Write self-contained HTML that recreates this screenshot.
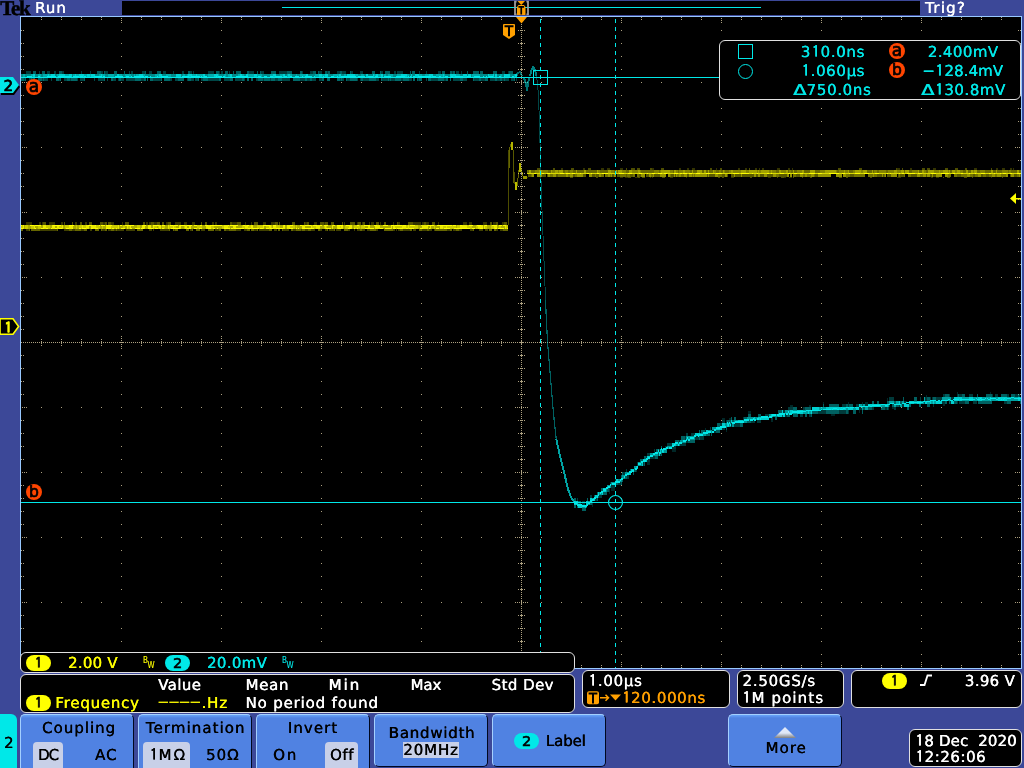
<!DOCTYPE html>
<html lang="en"><head><meta charset="utf-8"><title>Tek oscilloscope</title><style>
html,body{margin:0;padding:0}
body{width:1024px;height:768px;overflow:hidden;background:#3c4898;position:relative;will-change:transform;font:14px/14px 'DejaVu Sans','Liberation Sans',sans-serif}
header,main,section,nav,div,svg,.t,.bw{position:absolute;box-sizing:border-box}
header,main,section,nav{left:0;top:0;width:1024px;height:0}
.t{white-space:pre;text-rendering:geometricPrecision;font:15px/15px 'DejaVu Sans','Liberation Sans',sans-serif;-webkit-text-stroke:0.14px currentColor;text-shadow:.3px 0 0 currentColor}
.topbar{left:122px;top:1px;width:798px;height:14px;background:#000}
.acq{left:282px;top:7px;width:479px;height:1px;background:#00e8e8}
.screen{left:20px;top:16px;width:1002px;height:653px;background:#000;border:1px solid #98c8ff}
.plot{left:0;top:0}
.box{background:#000;border:1px solid #e0e0e0;border-radius:6px}
.btn{background:linear-gradient(to bottom,#68a4f8 0,#5082e2 3px);border-radius:5px 5px 0 0;border-top:1px solid #a4d0ff;border-left:1px solid #a4d0ff;border-right:1px solid #000820;top:714px;height:54px;width:114px}
.btn.f{border-radius:5px;height:53px;border-bottom:1px solid #000820}
.tab{left:0;top:714px;width:17px;height:54px;background:#00e8e8;border-radius:0 6px 0 0}
.sel{background:#c8d0e8;border-radius:4px 4px 0 0}
.pill{border-radius:8px;width:25px;height:16px;color:#000;text-align:center;font:14.5px/16px 'DejaVu Sans','Liberation Sans',sans-serif;-webkit-text-stroke:.6px #000}
.pill.p1{font-family:'IPAGothic','Liberation Sans',sans-serif;-webkit-text-stroke-width:.7px;background:#ffff00}
.pill.p2{background:#00e8e8}
.circ{border-radius:50%;background:#ff4500;color:#000;text-align:center;font:17px/14px 'DejaVu Sans','Liberation Sans',sans-serif;-webkit-text-stroke:.7px #000;width:16px;height:16px}
.circ.b{font-size:15.5px;line-height:17px}
.bw{font:8px/8px 'DejaVu Sans Condensed','DejaVu Sans','Liberation Sans',sans-serif;-webkit-text-stroke:.1px currentColor}
.dl{display:inline-block;line-height:0;transform:scaleX(1.3);transform-origin:0 50%;margin-right:2.8px}.o{font-family:'IPAGothic','Liberation Sans',sans-serif;font-size:15.5px;display:inline-block;width:9.5px;text-align:center;letter-spacing:0;line-height:0;position:relative;top:0px;-webkit-text-stroke-width:.45px}
.one{font-family:'IPAGothic','Liberation Sans',sans-serif;-webkit-text-stroke-width:.7px}
</style></head>
<body>
<header><div class="topbar" style="left:122px;top:1px"></div><div class="acq" style="left:282px;top:7px"></div><svg width="20" height="16" style="left:512px;top:0px" viewBox="512 0 20 16"><path d="M516.6 1.6h-1.6v12.8h1.6M526.4 1.6h1.6v12.8h-1.6" fill="none" stroke="#a09c9c" stroke-width="1.8"/><path d="M517.5 1h7.5l-3.75 4z" fill="#ffa000"/><path d="M517 7l1.5-2h5.5l1.5 2v8h-8.5z" fill="#ffa000"/><path d="M518.4 6.1h5.7v1.6h-2v6.8h-1.7v-6.8h-2z" fill="#000"/></svg><span class="t" style="left:0.2px;top:-2px;letter-spacing:-1.25px;color:#000;font:bold 21px/21px 'Liberation Serif',serif;-webkit-text-stroke:0.5px currentColor;text-shadow:none">Tek</span><span class="t" style="left:35px;top:1px;letter-spacing:1px;color:#ffffff">Run</span><span class="t" style="left:925px;top:1px;letter-spacing:1.25px;color:#ffffff">Trig?</span></header>
<main><div class="screen" style="left:20px;top:16px"></div><svg class="plot" width="1024" height="768" viewBox="0 0 1024 768"><g stroke="#aca080" stroke-width="1" shape-rendering="crispEdges"><line x1="41" y1="82.5" x2="1002" y2="82.5" stroke-dasharray="1 19" stroke-dashoffset="0"/><line x1="41" y1="147.5" x2="1002" y2="147.5" stroke-dasharray="1 19" stroke-dashoffset="0"/><line x1="41" y1="212.5" x2="1002" y2="212.5" stroke-dasharray="1 19" stroke-dashoffset="0"/><line x1="41" y1="277.5" x2="1002" y2="277.5" stroke-dasharray="1 19" stroke-dashoffset="0"/><line x1="21" y1="342.5" x2="1021" y2="342.5" stroke-dasharray="1 1" stroke-dashoffset="0"/><line x1="41" y1="407.5" x2="1002" y2="407.5" stroke-dasharray="1 19" stroke-dashoffset="0"/><line x1="41" y1="472.5" x2="1002" y2="472.5" stroke-dasharray="1 19" stroke-dashoffset="0"/><line x1="41" y1="537.5" x2="1002" y2="537.5" stroke-dasharray="1 19" stroke-dashoffset="0"/><line x1="41" y1="602.5" x2="1002" y2="602.5" stroke-dasharray="1 19" stroke-dashoffset="0"/><line x1="121.5" y1="30" x2="121.5" y2="655" stroke-dasharray="1 12" stroke-dashoffset="0"/><line x1="221.5" y1="30" x2="221.5" y2="655" stroke-dasharray="1 12" stroke-dashoffset="0"/><line x1="321.5" y1="30" x2="321.5" y2="655" stroke-dasharray="1 12" stroke-dashoffset="0"/><line x1="421.5" y1="30" x2="421.5" y2="655" stroke-dasharray="1 12" stroke-dashoffset="0"/><line x1="521.5" y1="18" x2="521.5" y2="668" stroke-dasharray="1 1" stroke-dashoffset="0"/><line x1="621.5" y1="30" x2="621.5" y2="655" stroke-dasharray="1 12" stroke-dashoffset="0"/><line x1="721.5" y1="30" x2="721.5" y2="655" stroke-dasharray="1 12" stroke-dashoffset="0"/><line x1="821.5" y1="30" x2="821.5" y2="655" stroke-dasharray="1 12" stroke-dashoffset="0"/><line x1="921.5" y1="30" x2="921.5" y2="655" stroke-dasharray="1 12" stroke-dashoffset="0"/><path d="M41 17.5h1M41 19.5h1M41 665.5h1M41 667.5h1M61 17.5h1M61 19.5h1M61 665.5h1M61 667.5h1M81 17.5h1M81 19.5h1M81 665.5h1M81 667.5h1M101 17.5h1M101 19.5h1M101 665.5h1M101 667.5h1M121 18.5h1M121 20.5h1M121 22.5h1M121 662.5h1M121 664.5h1M121 666.5h1M141 17.5h1M141 19.5h1M141 665.5h1M141 667.5h1M161 17.5h1M161 19.5h1M161 665.5h1M161 667.5h1M181 17.5h1M181 19.5h1M181 665.5h1M181 667.5h1M201 17.5h1M201 19.5h1M201 665.5h1M201 667.5h1M221 18.5h1M221 20.5h1M221 22.5h1M221 662.5h1M221 664.5h1M221 666.5h1M241 17.5h1M241 19.5h1M241 665.5h1M241 667.5h1M261 17.5h1M261 19.5h1M261 665.5h1M261 667.5h1M281 17.5h1M281 19.5h1M281 665.5h1M281 667.5h1M301 17.5h1M301 19.5h1M301 665.5h1M301 667.5h1M321 18.5h1M321 20.5h1M321 22.5h1M321 662.5h1M321 664.5h1M321 666.5h1M341 17.5h1M341 19.5h1M341 665.5h1M341 667.5h1M361 17.5h1M361 19.5h1M361 665.5h1M361 667.5h1M381 17.5h1M381 19.5h1M381 665.5h1M381 667.5h1M401 17.5h1M401 19.5h1M401 665.5h1M401 667.5h1M421 18.5h1M421 20.5h1M421 22.5h1M421 662.5h1M421 664.5h1M421 666.5h1M441 17.5h1M441 19.5h1M441 665.5h1M441 667.5h1M461 17.5h1M461 19.5h1M461 665.5h1M461 667.5h1M481 17.5h1M481 19.5h1M481 665.5h1M481 667.5h1M501 17.5h1M501 19.5h1M501 665.5h1M501 667.5h1M541 17.5h1M541 19.5h1M541 665.5h1M541 667.5h1M561 17.5h1M561 19.5h1M561 665.5h1M561 667.5h1M581 17.5h1M581 19.5h1M581 665.5h1M581 667.5h1M601 17.5h1M601 19.5h1M601 665.5h1M601 667.5h1M621 18.5h1M621 20.5h1M621 22.5h1M621 662.5h1M621 664.5h1M621 666.5h1M641 17.5h1M641 19.5h1M641 665.5h1M641 667.5h1M661 17.5h1M661 19.5h1M661 665.5h1M661 667.5h1M681 17.5h1M681 19.5h1M681 665.5h1M681 667.5h1M701 17.5h1M701 19.5h1M701 665.5h1M701 667.5h1M721 18.5h1M721 20.5h1M721 22.5h1M721 662.5h1M721 664.5h1M721 666.5h1M741 17.5h1M741 19.5h1M741 665.5h1M741 667.5h1M761 17.5h1M761 19.5h1M761 665.5h1M761 667.5h1M781 17.5h1M781 19.5h1M781 665.5h1M781 667.5h1M801 17.5h1M801 19.5h1M801 665.5h1M801 667.5h1M821 18.5h1M821 20.5h1M821 22.5h1M821 662.5h1M821 664.5h1M821 666.5h1M841 17.5h1M841 19.5h1M841 665.5h1M841 667.5h1M861 17.5h1M861 19.5h1M861 665.5h1M861 667.5h1M881 17.5h1M881 19.5h1M881 665.5h1M881 667.5h1M901 17.5h1M901 19.5h1M901 665.5h1M901 667.5h1M921 18.5h1M921 20.5h1M921 22.5h1M921 662.5h1M921 664.5h1M921 666.5h1M941 17.5h1M941 19.5h1M941 665.5h1M941 667.5h1M961 17.5h1M961 19.5h1M961 665.5h1M961 667.5h1M981 17.5h1M981 19.5h1M981 665.5h1M981 667.5h1M1001 17.5h1M1001 19.5h1M1001 665.5h1M1001 667.5h1M21 30.5h1M23 30.5h1M1018 30.5h1M1020 30.5h1M21 43.5h1M23 43.5h1M1018 43.5h1M1020 43.5h1M21 56.5h1M23 56.5h1M1018 56.5h1M1020 56.5h1M21 69.5h1M23 69.5h1M1018 69.5h1M1020 69.5h1M22 82.5h1M24 82.5h1M26 82.5h1M1015 82.5h1M1017 82.5h1M1019 82.5h1M21 95.5h1M23 95.5h1M1018 95.5h1M1020 95.5h1M21 108.5h1M23 108.5h1M1018 108.5h1M1020 108.5h1M21 121.5h1M23 121.5h1M1018 121.5h1M1020 121.5h1M21 134.5h1M23 134.5h1M1018 134.5h1M1020 134.5h1M22 147.5h1M24 147.5h1M26 147.5h1M1015 147.5h1M1017 147.5h1M1019 147.5h1M21 160.5h1M23 160.5h1M1018 160.5h1M1020 160.5h1M21 173.5h1M23 173.5h1M1018 173.5h1M1020 173.5h1M21 186.5h1M23 186.5h1M1018 186.5h1M1020 186.5h1M21 199.5h1M23 199.5h1M1018 199.5h1M1020 199.5h1M22 212.5h1M24 212.5h1M26 212.5h1M1015 212.5h1M1017 212.5h1M1019 212.5h1M21 225.5h1M23 225.5h1M1018 225.5h1M1020 225.5h1M21 238.5h1M23 238.5h1M1018 238.5h1M1020 238.5h1M21 251.5h1M23 251.5h1M1018 251.5h1M1020 251.5h1M21 264.5h1M23 264.5h1M1018 264.5h1M1020 264.5h1M22 277.5h1M24 277.5h1M26 277.5h1M1015 277.5h1M1017 277.5h1M1019 277.5h1M21 290.5h1M23 290.5h1M1018 290.5h1M1020 290.5h1M21 303.5h1M23 303.5h1M1018 303.5h1M1020 303.5h1M21 316.5h1M23 316.5h1M1018 316.5h1M1020 316.5h1M21 329.5h1M23 329.5h1M1018 329.5h1M1020 329.5h1M21 355.5h1M23 355.5h1M1018 355.5h1M1020 355.5h1M21 368.5h1M23 368.5h1M1018 368.5h1M1020 368.5h1M21 381.5h1M23 381.5h1M1018 381.5h1M1020 381.5h1M21 394.5h1M23 394.5h1M1018 394.5h1M1020 394.5h1M22 407.5h1M24 407.5h1M26 407.5h1M1015 407.5h1M1017 407.5h1M1019 407.5h1M21 420.5h1M23 420.5h1M1018 420.5h1M1020 420.5h1M21 433.5h1M23 433.5h1M1018 433.5h1M1020 433.5h1M21 446.5h1M23 446.5h1M1018 446.5h1M1020 446.5h1M21 459.5h1M23 459.5h1M1018 459.5h1M1020 459.5h1M22 472.5h1M24 472.5h1M26 472.5h1M1015 472.5h1M1017 472.5h1M1019 472.5h1M21 485.5h1M23 485.5h1M1018 485.5h1M1020 485.5h1M21 498.5h1M23 498.5h1M1018 498.5h1M1020 498.5h1M21 511.5h1M23 511.5h1M1018 511.5h1M1020 511.5h1M21 524.5h1M23 524.5h1M1018 524.5h1M1020 524.5h1M22 537.5h1M24 537.5h1M26 537.5h1M1015 537.5h1M1017 537.5h1M1019 537.5h1M21 550.5h1M23 550.5h1M1018 550.5h1M1020 550.5h1M21 563.5h1M23 563.5h1M1018 563.5h1M1020 563.5h1M21 576.5h1M23 576.5h1M1018 576.5h1M1020 576.5h1M21 589.5h1M23 589.5h1M1018 589.5h1M1020 589.5h1M22 602.5h1M24 602.5h1M26 602.5h1M1015 602.5h1M1017 602.5h1M1019 602.5h1M21 615.5h1M23 615.5h1M1018 615.5h1M1020 615.5h1M21 628.5h1M23 628.5h1M1018 628.5h1M1020 628.5h1M21 641.5h1M23 641.5h1M1018 641.5h1M1020 641.5h1M21 654.5h1M23 654.5h1M1018 654.5h1M1020 654.5h1M518 30.5h1M520 30.5h3M524 30.5h1M518 43.5h1M520 43.5h3M524 43.5h1M518 56.5h1M520 56.5h3M524 56.5h1M518 69.5h1M520 69.5h3M524 69.5h1M515 82.5h1M517 82.5h1M519 82.5h1M521 82.5h1M523 82.5h1M525 82.5h1M527 82.5h1M521 81.5h1M521 83.5h1M518 95.5h1M520 95.5h3M524 95.5h1M518 108.5h1M520 108.5h3M524 108.5h1M518 121.5h1M520 121.5h3M524 121.5h1M518 134.5h1M520 134.5h3M524 134.5h1M515 147.5h1M517 147.5h1M519 147.5h1M521 147.5h1M523 147.5h1M525 147.5h1M527 147.5h1M521 146.5h1M521 148.5h1M518 160.5h1M520 160.5h3M524 160.5h1M518 173.5h1M520 173.5h3M524 173.5h1M518 186.5h1M520 186.5h3M524 186.5h1M518 199.5h1M520 199.5h3M524 199.5h1M515 212.5h1M517 212.5h1M519 212.5h1M521 212.5h1M523 212.5h1M525 212.5h1M527 212.5h1M521 211.5h1M521 213.5h1M518 225.5h1M520 225.5h3M524 225.5h1M518 238.5h1M520 238.5h3M524 238.5h1M518 251.5h1M520 251.5h3M524 251.5h1M518 264.5h1M520 264.5h3M524 264.5h1M515 277.5h1M517 277.5h1M519 277.5h1M521 277.5h1M523 277.5h1M525 277.5h1M527 277.5h1M521 276.5h1M521 278.5h1M518 290.5h1M520 290.5h3M524 290.5h1M518 303.5h1M520 303.5h3M524 303.5h1M518 316.5h1M520 316.5h3M524 316.5h1M518 329.5h1M520 329.5h3M524 329.5h1M515 342.5h1M517 342.5h1M519 342.5h1M521 342.5h1M523 342.5h1M525 342.5h1M527 342.5h1M521 341.5h1M521 343.5h1M518 355.5h1M520 355.5h3M524 355.5h1M518 368.5h1M520 368.5h3M524 368.5h1M518 381.5h1M520 381.5h3M524 381.5h1M518 394.5h1M520 394.5h3M524 394.5h1M515 407.5h1M517 407.5h1M519 407.5h1M521 407.5h1M523 407.5h1M525 407.5h1M527 407.5h1M521 406.5h1M521 408.5h1M518 420.5h1M520 420.5h3M524 420.5h1M518 433.5h1M520 433.5h3M524 433.5h1M518 446.5h1M520 446.5h3M524 446.5h1M518 459.5h1M520 459.5h3M524 459.5h1M515 472.5h1M517 472.5h1M519 472.5h1M521 472.5h1M523 472.5h1M525 472.5h1M527 472.5h1M521 471.5h1M521 473.5h1M518 485.5h1M520 485.5h3M524 485.5h1M518 498.5h1M520 498.5h3M524 498.5h1M518 511.5h1M520 511.5h3M524 511.5h1M518 524.5h1M520 524.5h3M524 524.5h1M515 537.5h1M517 537.5h1M519 537.5h1M521 537.5h1M523 537.5h1M525 537.5h1M527 537.5h1M521 536.5h1M521 538.5h1M518 550.5h1M520 550.5h3M524 550.5h1M518 563.5h1M520 563.5h3M524 563.5h1M518 576.5h1M520 576.5h3M524 576.5h1M518 589.5h1M520 589.5h3M524 589.5h1M515 602.5h1M517 602.5h1M519 602.5h1M521 602.5h1M523 602.5h1M525 602.5h1M527 602.5h1M521 601.5h1M521 603.5h1M518 615.5h1M520 615.5h3M524 615.5h1M518 628.5h1M520 628.5h3M524 628.5h1M518 641.5h1M520 641.5h3M524 641.5h1M518 654.5h1M520 654.5h3M524 654.5h1M41 339.5h1M41 341.5h1M41 342.5h1M41 343.5h1M41 345.5h1M61 339.5h1M61 341.5h1M61 342.5h1M61 343.5h1M61 345.5h1M81 339.5h1M81 341.5h1M81 342.5h1M81 343.5h1M81 345.5h1M101 339.5h1M101 341.5h1M101 342.5h1M101 343.5h1M101 345.5h1M121 336.5h1M121 338.5h1M121 340.5h1M121 342.5h1M121 344.5h1M121 346.5h1M121 348.5h1M120 342.5h3M141 339.5h1M141 341.5h1M141 342.5h1M141 343.5h1M141 345.5h1M161 339.5h1M161 341.5h1M161 342.5h1M161 343.5h1M161 345.5h1M181 339.5h1M181 341.5h1M181 342.5h1M181 343.5h1M181 345.5h1M201 339.5h1M201 341.5h1M201 342.5h1M201 343.5h1M201 345.5h1M221 336.5h1M221 338.5h1M221 340.5h1M221 342.5h1M221 344.5h1M221 346.5h1M221 348.5h1M220 342.5h3M241 339.5h1M241 341.5h1M241 342.5h1M241 343.5h1M241 345.5h1M261 339.5h1M261 341.5h1M261 342.5h1M261 343.5h1M261 345.5h1M281 339.5h1M281 341.5h1M281 342.5h1M281 343.5h1M281 345.5h1M301 339.5h1M301 341.5h1M301 342.5h1M301 343.5h1M301 345.5h1M321 336.5h1M321 338.5h1M321 340.5h1M321 342.5h1M321 344.5h1M321 346.5h1M321 348.5h1M320 342.5h3M341 339.5h1M341 341.5h1M341 342.5h1M341 343.5h1M341 345.5h1M361 339.5h1M361 341.5h1M361 342.5h1M361 343.5h1M361 345.5h1M381 339.5h1M381 341.5h1M381 342.5h1M381 343.5h1M381 345.5h1M401 339.5h1M401 341.5h1M401 342.5h1M401 343.5h1M401 345.5h1M421 336.5h1M421 338.5h1M421 340.5h1M421 342.5h1M421 344.5h1M421 346.5h1M421 348.5h1M420 342.5h3M441 339.5h1M441 341.5h1M441 342.5h1M441 343.5h1M441 345.5h1M461 339.5h1M461 341.5h1M461 342.5h1M461 343.5h1M461 345.5h1M481 339.5h1M481 341.5h1M481 342.5h1M481 343.5h1M481 345.5h1M501 339.5h1M501 341.5h1M501 342.5h1M501 343.5h1M501 345.5h1M521 336.5h1M521 338.5h1M521 340.5h1M521 342.5h1M521 344.5h1M521 346.5h1M521 348.5h1M520 342.5h3M541 339.5h1M541 341.5h1M541 342.5h1M541 343.5h1M541 345.5h1M561 339.5h1M561 341.5h1M561 342.5h1M561 343.5h1M561 345.5h1M581 339.5h1M581 341.5h1M581 342.5h1M581 343.5h1M581 345.5h1M601 339.5h1M601 341.5h1M601 342.5h1M601 343.5h1M601 345.5h1M621 336.5h1M621 338.5h1M621 340.5h1M621 342.5h1M621 344.5h1M621 346.5h1M621 348.5h1M620 342.5h3M641 339.5h1M641 341.5h1M641 342.5h1M641 343.5h1M641 345.5h1M661 339.5h1M661 341.5h1M661 342.5h1M661 343.5h1M661 345.5h1M681 339.5h1M681 341.5h1M681 342.5h1M681 343.5h1M681 345.5h1M701 339.5h1M701 341.5h1M701 342.5h1M701 343.5h1M701 345.5h1M721 336.5h1M721 338.5h1M721 340.5h1M721 342.5h1M721 344.5h1M721 346.5h1M721 348.5h1M720 342.5h3M741 339.5h1M741 341.5h1M741 342.5h1M741 343.5h1M741 345.5h1M761 339.5h1M761 341.5h1M761 342.5h1M761 343.5h1M761 345.5h1M781 339.5h1M781 341.5h1M781 342.5h1M781 343.5h1M781 345.5h1M801 339.5h1M801 341.5h1M801 342.5h1M801 343.5h1M801 345.5h1M821 336.5h1M821 338.5h1M821 340.5h1M821 342.5h1M821 344.5h1M821 346.5h1M821 348.5h1M820 342.5h3M841 339.5h1M841 341.5h1M841 342.5h1M841 343.5h1M841 345.5h1M861 339.5h1M861 341.5h1M861 342.5h1M861 343.5h1M861 345.5h1M881 339.5h1M881 341.5h1M881 342.5h1M881 343.5h1M881 345.5h1M901 339.5h1M901 341.5h1M901 342.5h1M901 343.5h1M901 345.5h1M921 336.5h1M921 338.5h1M921 340.5h1M921 342.5h1M921 344.5h1M921 346.5h1M921 348.5h1M920 342.5h3M941 339.5h1M941 341.5h1M941 342.5h1M941 343.5h1M941 345.5h1M961 339.5h1M961 341.5h1M961 342.5h1M961 343.5h1M961 345.5h1M981 339.5h1M981 341.5h1M981 342.5h1M981 343.5h1M981 345.5h1M1001 339.5h1M1001 341.5h1M1001 342.5h1M1001 343.5h1M1001 345.5h1"/></g><g fill="none" shape-rendering="crispEdges" stroke-linejoin="round"><path d="M26 223.5h6M39 223.5h2M42 223.5h1M49 223.5h6M61 223.5h2M75 223.5h2M85 223.5h2M103 223.5h2M111 223.5h3M122 223.5h1M146 223.5h2M149 223.5h2M154 223.5h3M166 223.5h2M175 223.5h6M184 223.5h3M192 223.5h3M212 223.5h2M215 223.5h2M232 223.5h5M245 223.5h1M251 223.5h1M263 223.5h3M271 223.5h4M305 223.5h2M314 223.5h3M324 223.5h1M344 223.5h1M357 223.5h1M362 223.5h1M369 223.5h1M371 223.5h3M380 223.5h1M393 223.5h1M398 223.5h2M413 223.5h8M422 223.5h2M426 223.5h3M438 223.5h1M463 223.5h4M469 223.5h3M483 223.5h4M493 223.5h3M502 223.5h2" stroke="#ffff00" stroke-width="3" stroke-opacity="0.2"/><path d="M43 223.5h3M64 223.5h1M72 223.5h1M80 223.5h2M89 223.5h3M100 223.5h3M105 223.5h2M108 223.5h3M125 223.5h4M143 223.5h2M151 223.5h3M157 223.5h3M162 223.5h2M168 223.5h3M201 223.5h1M205 223.5h2M230 223.5h2M237 223.5h4M254 223.5h4M275 223.5h3M279 223.5h1M292 223.5h3M304 223.5h1M307 223.5h2M320 223.5h4M325 223.5h3M331 223.5h3M342 223.5h1M350 223.5h5M358 223.5h3M363 223.5h2M376 223.5h3M384 223.5h2M397 223.5h1M408 223.5h5M424 223.5h2M432 223.5h3M490 223.5h2M496 223.5h2M504 223.5h3" stroke="#ffff00" stroke-width="3" stroke-opacity="0.32"/><path d="M24 227h1M28 227h3M35 227h3M41 227h2M50 227h2M55 227h2M63 227h2M73 227h3M77 227h2M89 227h2M100 227h2M103 227h3M119 227h4M125 227h2M131 227h6M140 227h2M145 227h3M151 227h2M157 227h1M161 227h1M165 227h3M176 227h3M181 227h3M187 227h2M191 227h6M202 227h4M214 227h8M230 227h3M236 227h6M253 227h4M264 227h2M272 227h1M280 227h3M285 227h2M295 227h1M297 227h5M305 227h6M320 227h4M327 227h5M333 227h4M343 227h2M352 227h2M360 227h1M365 227h3M370 227h5M380 227h11M392 227h1M418 227h4M428 227h2M431 227h3M435 227h5M456 227h1M472 227h4M483 227h1M487 227h4M497 227h2M501 227h4" stroke="#ffff00" stroke-width="4" stroke-opacity="0.68"/><path d="M21 227h2M25 227h3M31 227h3M38 227h3M46 227h4M59 227h3M65 227h4M76 227h1M79 227h3M83 227h3M96 227h4M102 227h1M111 227h7M123 227h2M128 227h2M137 227h3M154 227h3M158 227h1M162 227h3M169 227h4M174 227h2M184 227h1M197 227h5M211 227h3M222 227h2M228 227h2M242 227h3M248 227h3M257 227h6M266 227h3M271 227h1M276 227h4M290 227h5M296 227h1M312 227h4M324 227h1M326 227h1M340 227h1M345 227h4M354 227h6M361 227h4M395 227h7M406 227h2M409 227h9M434 227h1M443 227h3M447 227h9M457 227h3M467 227h5M476 227h2M485 227h2M491 227h3M499 227h2M506 227h2" stroke="#ffff00" stroke-width="4" stroke-opacity="0.8"/><path d="M23 227h1M34 227h1M43 227h3M52 227h3M57 227h2M62 227h1M69 227h4M82 227h1M86 227h3M91 227h5M106 227h5M118 227h1M127 227h1M130 227h1M142 227h3M148 227h3M153 227h1M159 227h2M168 227h1M173 227h1M179 227h2M185 227h2M189 227h2M206 227h5M224 227h4M233 227h3M245 227h3M251 227h2M263 227h1M269 227h2M273 227h3M283 227h2M287 227h3M302 227h3M311 227h1M316 227h4M325 227h1M332 227h1M337 227h3M341 227h2M349 227h3M368 227h2M375 227h5M391 227h1M393 227h2M402 227h4M408 227h1M422 227h6M430 227h1M440 227h3M446 227h1M460 227h7M478 227h5M484 227h1M494 227h3M505 227h1" stroke="#ffff00" stroke-width="4" stroke-opacity="0.92"/><path d="M21 225.5h1M30 225.5h4M35 225.5h6M53 225.5h8M69 225.5h5M88 225.5h4M95 225.5h1M99 225.5h1M101 225.5h4M106 225.5h6M120 225.5h2M125 225.5h9M143 225.5h3M153 225.5h6M162 225.5h3M170 225.5h3M174 225.5h4M180 225.5h5M187 225.5h5M194 225.5h3M200 225.5h2M205 225.5h3M210 225.5h12M228 225.5h1M230 225.5h8M243 225.5h2M247 225.5h2M263 225.5h7M273 225.5h3M284 225.5h1M290 225.5h3M300 225.5h2M305 225.5h6M313 225.5h4M320 225.5h2M324 225.5h4M333 225.5h2M337 225.5h6M346 225.5h4M357 225.5h2M364 225.5h6M374 225.5h3M383 225.5h5M391 225.5h3M395 225.5h7M403 225.5h3M410 225.5h5M427 225.5h7M437 225.5h15M453 225.5h3M460 225.5h2M469 225.5h4M477 225.5h4M485 225.5h2M492 225.5h5M499 225.5h3M503 225.5h3" stroke="#ffff00" stroke-width="1" stroke-opacity="1"/><path d="M21 228.5h2M35 228.5h1M41 228.5h3M46 228.5h2M51 228.5h1M55 228.5h2M59 228.5h3M66 228.5h3M72 228.5h1M79 228.5h2M82 228.5h4M91 228.5h2M95 228.5h3M106 228.5h5M112 228.5h2M116 228.5h1M121 228.5h4M130 228.5h2M135 228.5h5M141 228.5h3M148 228.5h5M155 228.5h3M162 228.5h2M171 228.5h9M187 228.5h4M194 228.5h3M199 228.5h3M208 228.5h3M213 228.5h2M217 228.5h1M224 228.5h6M231 228.5h2M234 228.5h10M248 228.5h3M252 228.5h7M260 228.5h3M266 228.5h3M270 228.5h3M276 228.5h7M289 228.5h4M296 228.5h1M298 228.5h1M302 228.5h12M326 228.5h5M338 228.5h3M348 228.5h3M354 228.5h1M357 228.5h1M365 228.5h9M380 228.5h3M385 228.5h6M393 228.5h3M397 228.5h6M406 228.5h2M409 228.5h5M420 228.5h3M429 228.5h1M436 228.5h3M444 228.5h6M454 228.5h16M472 228.5h3M480 228.5h3M495 228.5h2M498 228.5h6M507 228.5h1" stroke="#ffff00" stroke-width="1" stroke-opacity="1"/><path d="M26 230h3M40 230h17M64 230h5M72 230h3M81 230h3M90 230h2M102 230h3M108 230h3M114 230h2M117 230h7M126 230h9M149 230h3M153 230h1M160 230h9M174 230h1M190 230h2M201 230h4M215 230h4M226 230h3M236 230h5M244 230h3M254 230h3M259 230h10M274 230h3M283 230h6M293 230h3M301 230h1M305 230h3M311 230h4M320 230h2M325 230h2M329 230h5M336 230h5M348 230h2M354 230h1M357 230h3M362 230h3M367 230h3M376 230h2M393 230h2M396 230h1M398 230h2M403 230h7M413 230h3M422 230h5M429 230h3M434 230h1M447 230h3M453 230h3M459 230h3M470 230h3M479 230h4M485 230h3M496 230h2M500 230h3" stroke="#ffff00" stroke-width="2" stroke-opacity="0.25"/><path d="M21 230h2M29 230h1M31 230h9M57 230h1M69 230h3M75 230h6M84 230h3M95 230h4M101 230h1M105 230h2M111 230h3M116 230h1M137 230h6M169 230h1M173 230h1M175 230h3M186 230h3M192 230h1M196 230h4M208 230h6M219 230h2M224 230h2M229 230h7M247 230h3M251 230h3M257 230h1M269 230h3M278 230h2M282 230h1M291 230h2M296 230h5M302 230h3M308 230h3M318 230h2M327 230h1M334 230h1M344 230h4M360 230h2M370 230h6M384 230h9M400 230h3M410 230h2M419 230h3M427 230h2M435 230h12M450 230h2M456 230h3M473 230h1M489 230h3M494 230h2M503 230h5" stroke="#ffff00" stroke-width="2" stroke-opacity="0.4"/><path d="M561 169h2M583 169h2M601 169h3M607 169h3M620 169h3M652 169h2M679 169h2M687 169h2M692 169h3M716 169h1M738 169h2M745 169h2M755 169h2M759 169h1M762 169h2M777 169h3M788 169h2M792 169h1M897 169h3M910 169h2M933 169h3M974 169h3M996 169h2M1002 169h3M1010 169h2M1013 169h1" stroke="#ffff00" stroke-width="2" stroke-opacity="0.2"/><path d="M537 169h3M553 169h2M571 169h3M588 169h3M626 169h1M631 169h4M637 169h3M650 169h2M661 169h3M710 169h2M720 169h2M749 169h1M838 169h3M859 169h3M896 169h1M902 169h1M922 169h3M927 169h3M945 169h3M955 169h3M965 169h2M991 169h1" stroke="#ffff00" stroke-width="2" stroke-opacity="0.3"/><path d="M527 171.5h2M531 171.5h4M548 171.5h3M563 171.5h2M568 171.5h2M573 171.5h3M577 171.5h7M586 171.5h11M600 171.5h8M614 171.5h2M617 171.5h1M626 171.5h3M641 171.5h13M659 171.5h1M673 171.5h1M678 171.5h1M690 171.5h2M693 171.5h4M702 171.5h2M706 171.5h2M709 171.5h4M716 171.5h3M721 171.5h2M725 171.5h4M776 171.5h3M788 171.5h1M791 171.5h2M794 171.5h3M804 171.5h6M815 171.5h5M837 171.5h2M849 171.5h4M867 171.5h5M873 171.5h1M877 171.5h2M886 171.5h2M904 171.5h1M909 171.5h3M919 171.5h3M926 171.5h2M950 171.5h2M963 171.5h3M968 171.5h3M977 171.5h3M985 171.5h6M993 171.5h3M997 171.5h5M1008 171.5h1M1011 171.5h6M1019 171.5h2" stroke="#ffff00" stroke-width="3" stroke-opacity="0.42"/><path d="M535 171.5h4M542 171.5h6M552 171.5h3M558 171.5h1M565 171.5h3M570 171.5h3M598 171.5h2M611 171.5h3M622 171.5h4M632 171.5h6M640 171.5h1M654 171.5h5M660 171.5h1M670 171.5h3M676 171.5h2M679 171.5h4M685 171.5h5M714 171.5h2M719 171.5h2M724 171.5h1M729 171.5h2M733 171.5h8M746 171.5h3M757 171.5h1M759 171.5h2M769 171.5h2M772 171.5h4M781 171.5h5M789 171.5h2M797 171.5h5M820 171.5h5M836 171.5h1M839 171.5h5M845 171.5h3M853 171.5h2M861 171.5h2M874 171.5h3M879 171.5h7M888 171.5h6M897 171.5h4M912 171.5h6M924 171.5h2M934 171.5h5M940 171.5h3M948 171.5h1M955 171.5h2M960 171.5h3M973 171.5h1M980 171.5h5M1002 171.5h6M1009 171.5h2" stroke="#ffff00" stroke-width="3" stroke-opacity="0.52"/><path d="M529 171.5h2M539 171.5h3M551 171.5h1M555 171.5h3M559 171.5h4M576 171.5h1M584 171.5h2M597 171.5h1M608 171.5h3M616 171.5h1M618 171.5h4M629 171.5h3M638 171.5h2M661 171.5h9M674 171.5h2M683 171.5h2M692 171.5h1M697 171.5h5M704 171.5h2M708 171.5h1M713 171.5h1M723 171.5h1M731 171.5h2M741 171.5h5M749 171.5h8M758 171.5h1M761 171.5h8M771 171.5h1M779 171.5h2M786 171.5h2M793 171.5h1M802 171.5h2M810 171.5h5M825 171.5h11M844 171.5h1M848 171.5h1M855 171.5h6M863 171.5h4M872 171.5h1M894 171.5h3M901 171.5h3M905 171.5h4M918 171.5h1M922 171.5h2M928 171.5h6M939 171.5h1M943 171.5h5M949 171.5h1M952 171.5h3M957 171.5h3M966 171.5h2M971 171.5h2M974 171.5h3M991 171.5h2M996 171.5h1M1017 171.5h2" stroke="#ffff00" stroke-width="3" stroke-opacity="0.64"/><path d="M527 173.5h7M536 173.5h6M544 173.5h3M550 173.5h10M564 173.5h2M570 173.5h2M575 173.5h5M581 173.5h6M589 173.5h2M592 173.5h5M599 173.5h3M608 173.5h11M624 173.5h4M632 173.5h7M642 173.5h5M648 173.5h4M655 173.5h3M662 173.5h2M667 173.5h7M678 173.5h2M682 173.5h1M687 173.5h2M692 173.5h4M700 173.5h6M710 173.5h6M721 173.5h12M739 173.5h2M749 173.5h3M753 173.5h4M758 173.5h9M769 173.5h2M772 173.5h8M784 173.5h4M790 173.5h4M797 173.5h3M803 173.5h6M815 173.5h3M821 173.5h8M839 173.5h3M845 173.5h4M850 173.5h5M860 173.5h4M869 173.5h6M879 173.5h8M888 173.5h2M891 173.5h8M900 173.5h2M904 173.5h3M915 173.5h3M921 173.5h10M936 173.5h5M949 173.5h4M955 173.5h6M963 173.5h6M970 173.5h5M976 173.5h5M985 173.5h4M991 173.5h3M995 173.5h5M1001 173.5h2M1006 173.5h4M1012 173.5h5M1020 173.5h1" stroke="#ffff00" stroke-width="1" stroke-opacity="0.85"/><path d="M534 173.5h2M542 173.5h2M547 173.5h3M560 173.5h4M566 173.5h4M572 173.5h3M580 173.5h1M587 173.5h2M591 173.5h1M597 173.5h2M602 173.5h6M619 173.5h5M628 173.5h4M639 173.5h3M647 173.5h1M652 173.5h3M658 173.5h4M664 173.5h3M674 173.5h4M680 173.5h2M683 173.5h4M689 173.5h3M696 173.5h4M706 173.5h4M716 173.5h5M733 173.5h6M741 173.5h8M752 173.5h1M757 173.5h1M767 173.5h2M771 173.5h1M780 173.5h4M788 173.5h2M794 173.5h3M800 173.5h3M809 173.5h6M818 173.5h3M829 173.5h10M842 173.5h3M849 173.5h1M855 173.5h5M864 173.5h5M875 173.5h4M887 173.5h1M890 173.5h1M899 173.5h1M902 173.5h2M907 173.5h8M918 173.5h3M931 173.5h5M941 173.5h8M953 173.5h2M961 173.5h2M969 173.5h1M975 173.5h1M981 173.5h4M989 173.5h2M994 173.5h1M1000 173.5h1M1003 173.5h3M1010 173.5h2M1017 173.5h3" stroke="#ffff00" stroke-width="1" stroke-opacity="1"/><path d="M528 175.5h3M542 175.5h4M547 175.5h1M556 175.5h2M573 175.5h2M583 175.5h3M592 175.5h3M596 175.5h3M612 175.5h2M617 175.5h3M626 175.5h1M630 175.5h3M639 175.5h2M646 175.5h3M654 175.5h6M671 175.5h3M675 175.5h1M687 175.5h2M707 175.5h1M709 175.5h6M722 175.5h3M727 175.5h1M731 175.5h3M735 175.5h6M742 175.5h12M756 175.5h2M760 175.5h4M767 175.5h6M779 175.5h8M796 175.5h4M815 175.5h3M850 175.5h4M877 175.5h5M883 175.5h1M887 175.5h4M898 175.5h1M900 175.5h4M911 175.5h6M926 175.5h1M930 175.5h2M933 175.5h3M957 175.5h4M973 175.5h2M981 175.5h2M986 175.5h3M1010 175.5h1M1014 175.5h3M1020 175.5h1" stroke="#ffff00" stroke-width="3" stroke-opacity="0.35"/><path d="M531 175.5h1M550 175.5h3M558 175.5h8M568 175.5h2M575 175.5h2M595 175.5h1M601 175.5h3M605 175.5h3M610 175.5h1M620 175.5h6M627 175.5h3M633 175.5h2M637 175.5h2M651 175.5h2M670 175.5h1M677 175.5h2M681 175.5h3M692 175.5h1M694 175.5h1M718 175.5h4M776 175.5h3M793 175.5h3M803 175.5h2M807 175.5h4M814 175.5h1M846 175.5h4M854 175.5h11M868 175.5h5M874 175.5h3M884 175.5h1M899 175.5h1M904 175.5h1M908 175.5h3M920 175.5h3M948 175.5h3M954 175.5h3M961 175.5h6M970 175.5h3M975 175.5h3M983 175.5h3M989 175.5h3M995 175.5h2M1001 175.5h5M1017 175.5h2" stroke="#ffff00" stroke-width="3" stroke-opacity="0.45"/><path d="M532 175.5h2M537 175.5h5M548 175.5h2M553 175.5h3M566 175.5h2M570 175.5h3M577 175.5h6M589 175.5h3M599 175.5h2M608 175.5h2M611 175.5h1M614 175.5h2M641 175.5h4M649 175.5h2M653 175.5h1M660 175.5h6M668 175.5h2M674 175.5h1M676 175.5h1M679 175.5h2M684 175.5h3M689 175.5h3M693 175.5h1M695 175.5h12M708 175.5h1M715 175.5h3M725 175.5h2M734 175.5h1M741 175.5h1M754 175.5h2M758 175.5h2M764 175.5h3M773 175.5h3M787 175.5h2M790 175.5h2M800 175.5h3M805 175.5h2M811 175.5h3M818 175.5h13M836 175.5h6M843 175.5h3M873 175.5h1M882 175.5h1M885 175.5h1M891 175.5h6M917 175.5h3M923 175.5h3M927 175.5h3M932 175.5h1M936 175.5h6M945 175.5h3M967 175.5h3M978 175.5h3M992 175.5h3M997 175.5h4M1006 175.5h2M1011 175.5h3M1019 175.5h1" stroke="#ffff00" stroke-width="3" stroke-opacity="0.58"/><path d="M527 177.5h1M620 177.5h3M625 177.5h3M635 177.5h3M650 177.5h1M652 177.5h1M670 177.5h3M686 177.5h1M731 177.5h3M768 177.5h3M784 177.5h2M789 177.5h3M897 177.5h4M931 177.5h2M936 177.5h3M991 177.5h1" stroke="#ffff00" stroke-width="1" stroke-opacity="0.2"/><path d="M570 177.5h3M596 177.5h2M628 177.5h3M638 177.5h2M642 177.5h3M662 177.5h3M718 177.5h2M722 177.5h2M750 177.5h2M777 177.5h1M781 177.5h3M793 177.5h1M802 177.5h1M810 177.5h2M839 177.5h3M846 177.5h2M870 177.5h2M943 177.5h1M947 177.5h3M964 177.5h3M972 177.5h1M1002 177.5h1" stroke="#ffff00" stroke-width="1" stroke-opacity="0.3"/><polyline points="508.5,225 508.5,150" stroke="#ffff00" stroke-width="1" stroke-opacity="0.3"/><polyline points="509.5,168 509.5,150 510.5,144" stroke="#ffff00" stroke-width="1" stroke-opacity="0.4"/><polyline points="511.5,142 511.5,150" stroke="#ffff00" stroke-width="2" stroke-opacity="0.7"/><polyline points="513,148 513.5,183" stroke="#ffff00" stroke-width="1" stroke-opacity="0.35"/><polyline points="514.5,172 515,184" stroke="#ffff00" stroke-width="1" stroke-opacity="0.3"/><polyline points="516,182 516,190" stroke="#ffff00" stroke-width="2" stroke-opacity="0.75"/><polyline points="517.5,186 518.5,170" stroke="#ffff00" stroke-width="1" stroke-opacity="0.4"/><polyline points="520,163 520,172" stroke="#ffff00" stroke-width="2" stroke-opacity="0.7"/><polyline points="521.5,168 522.5,176" stroke="#ffff00" stroke-width="1" stroke-opacity="0.45"/><polyline points="523,177.5 527,177.5" stroke="#ffff00" stroke-width="3" stroke-opacity="0.6"/><path d="M26 72.5h5M39 72.5h1M47 72.5h3M54 72.5h2M62 72.5h2M81 72.5h1M90 72.5h1M101 72.5h2M105 72.5h3M129 72.5h1M131 72.5h2M142 72.5h3M149 72.5h3M163 72.5h3M173 72.5h1M182 72.5h2M190 72.5h2M193 72.5h1M208 72.5h6M219 72.5h1M221 72.5h2M229 72.5h1M249 72.5h5M261 72.5h3M279 72.5h8M302 72.5h1M310 72.5h3M319 72.5h3M327 72.5h1M337 72.5h3M342 72.5h4M351 72.5h2M360 72.5h3M381 72.5h2M394 72.5h2M397 72.5h6M419 72.5h1M426 72.5h1M438 72.5h3M452 72.5h1M456 72.5h3M461 72.5h1M502 72.5h3M508 72.5h1" stroke="#00e8e8" stroke-width="3" stroke-opacity="0.25"/><path d="M33 72.5h3M42 72.5h3M59 72.5h3M97 72.5h4M104 72.5h1M114 72.5h3M124 72.5h1M145 72.5h1M157 72.5h4M188 72.5h2M216 72.5h3M225 72.5h3M233 72.5h1M236 72.5h5M247 72.5h2M257 72.5h1M260 72.5h1M271 72.5h5M287 72.5h5M300 72.5h2M313 72.5h3M318 72.5h1M325 72.5h2M328 72.5h2M340 72.5h2M350 72.5h1M372 72.5h3M380 72.5h1M385 72.5h5M410 72.5h1M412 72.5h3M442 72.5h3M450 72.5h2M453 72.5h2M467 72.5h1M473 72.5h6M480 72.5h3M493 72.5h4M509 72.5h4" stroke="#00e8e8" stroke-width="3" stroke-opacity="0.4"/><path d="M21 75.5h2M25 75.5h6M35 75.5h3M41 75.5h2M55 75.5h2M72 75.5h1M95 75.5h4M105 75.5h3M114 75.5h3M122 75.5h3M131 75.5h3M135 75.5h1M145 75.5h10M162 75.5h4M171 75.5h5M181 75.5h2M185 75.5h2M205 75.5h3M219 75.5h5M226 75.5h2M232 75.5h6M244 75.5h2M262 75.5h8M276 75.5h4M285 75.5h2M292 75.5h4M297 75.5h3M308 75.5h7M328 75.5h5M341 75.5h3M346 75.5h1M358 75.5h3M364 75.5h2M368 75.5h5M383 75.5h1M386 75.5h2M393 75.5h4M409 75.5h2M412 75.5h3M422 75.5h3M433 75.5h3M445 75.5h5M460 75.5h3M467 75.5h1M471 75.5h1M480 75.5h8M494 75.5h1M497 75.5h3M502 75.5h2M510 75.5h4" stroke="#00e8e8" stroke-width="3" stroke-opacity="0.6"/><path d="M23 75.5h2M31 75.5h2M38 75.5h3M43 75.5h5M49 75.5h2M57 75.5h2M65 75.5h4M73 75.5h2M76 75.5h3M84 75.5h3M90 75.5h1M99 75.5h2M102 75.5h3M108 75.5h6M119 75.5h3M125 75.5h6M134 75.5h1M136 75.5h3M143 75.5h2M155 75.5h4M166 75.5h5M183 75.5h2M187 75.5h1M192 75.5h4M197 75.5h6M208 75.5h6M218 75.5h1M224 75.5h2M228 75.5h2M238 75.5h2M242 75.5h2M248 75.5h6M257 75.5h5M270 75.5h3M280 75.5h3M287 75.5h1M290 75.5h2M296 75.5h1M300 75.5h6M315 75.5h4M322 75.5h3M333 75.5h6M344 75.5h2M355 75.5h3M361 75.5h3M374 75.5h2M378 75.5h3M384 75.5h2M388 75.5h5M397 75.5h4M407 75.5h2M419 75.5h3M425 75.5h4M436 75.5h7M444 75.5h1M456 75.5h4M472 75.5h8M489 75.5h4M500 75.5h2M514 75.5h1" stroke="#00e8e8" stroke-width="3" stroke-opacity="0.75"/><path d="M33 75.5h2M48 75.5h1M51 75.5h4M59 75.5h6M69 75.5h3M75 75.5h1M79 75.5h5M87 75.5h3M91 75.5h4M101 75.5h1M117 75.5h2M139 75.5h4M159 75.5h3M176 75.5h5M188 75.5h4M196 75.5h1M203 75.5h2M214 75.5h4M230 75.5h2M240 75.5h2M246 75.5h2M254 75.5h3M273 75.5h3M283 75.5h2M288 75.5h2M306 75.5h2M319 75.5h3M325 75.5h3M339 75.5h2M347 75.5h8M366 75.5h2M373 75.5h1M376 75.5h2M381 75.5h2M401 75.5h6M411 75.5h1M415 75.5h4M429 75.5h4M443 75.5h1M450 75.5h6M463 75.5h4M468 75.5h3M488 75.5h1M493 75.5h1M495 75.5h2M504 75.5h6M515 75.5h2" stroke="#00e8e8" stroke-width="3" stroke-opacity="0.9"/><path d="M27 76.5h5M38 76.5h2M47 76.5h9M58 76.5h13M73 76.5h6M80 76.5h3M84 76.5h2M94 76.5h8M103 76.5h2M115 76.5h8M126 76.5h3M131 76.5h1M134 76.5h10M145 76.5h3M150 76.5h1M157 76.5h1M161 76.5h7M182 76.5h7M191 76.5h9M201 76.5h1M204 76.5h3M216 76.5h1M218 76.5h4M223 76.5h2M236 76.5h12M258 76.5h3M264 76.5h3M270 76.5h3M275 76.5h7M284 76.5h3M290 76.5h2M295 76.5h4M302 76.5h1M305 76.5h7M314 76.5h1M323 76.5h1M331 76.5h3M337 76.5h1M341 76.5h15M358 76.5h7M368 76.5h5M375 76.5h3M384 76.5h7M396 76.5h9M408 76.5h1M410 76.5h1M413 76.5h2M418 76.5h13M432 76.5h4M439 76.5h2M445 76.5h3M451 76.5h2M455 76.5h8M467 76.5h4M474 76.5h6M483 76.5h1M486 76.5h1M489 76.5h4M499 76.5h2M504 76.5h1M512 76.5h2" stroke="#00e8e8" stroke-width="1" stroke-opacity="1"/><path d="M24 79.5h1M29 79.5h2M32 79.5h1M42 79.5h1M44 79.5h4M51 79.5h1M59 79.5h1M64 79.5h3M70 79.5h1M77 79.5h1M80 79.5h4M94 79.5h1M98 79.5h6M107 79.5h1M113 79.5h3M118 79.5h1M121 79.5h3M126 79.5h9M141 79.5h3M153 79.5h8M170 79.5h2M175 79.5h3M187 79.5h1M191 79.5h3M195 79.5h3M201 79.5h2M208 79.5h11M224 79.5h6M235 79.5h7M244 79.5h1M256 79.5h2M263 79.5h1M270 79.5h1M275 79.5h3M282 79.5h8M300 79.5h5M307 79.5h3M312 79.5h4M319 79.5h3M340 79.5h1M342 79.5h2M347 79.5h3M357 79.5h1M360 79.5h1M363 79.5h6M376 79.5h3M382 79.5h6M389 79.5h1M391 79.5h4M401 79.5h2M409 79.5h3M418 79.5h1M426 79.5h1M431 79.5h7M444 79.5h2M453 79.5h7M463 79.5h4M474 79.5h5M481 79.5h4M490 79.5h5M497 79.5h3M502 79.5h2M505 79.5h4M511 79.5h3M516 79.5h1" stroke="#00e8e8" stroke-width="3" stroke-opacity="0.3"/><path d="M21 79.5h3M25 79.5h1M31 79.5h1M33 79.5h2M38 79.5h4M43 79.5h1M56 79.5h3M60 79.5h1M67 79.5h3M71 79.5h6M84 79.5h1M104 79.5h1M111 79.5h2M119 79.5h2M135 79.5h6M144 79.5h2M147 79.5h1M150 79.5h3M161 79.5h1M164 79.5h6M178 79.5h6M188 79.5h3M198 79.5h1M203 79.5h5M219 79.5h2M230 79.5h3M242 79.5h2M247 79.5h2M251 79.5h2M258 79.5h5M264 79.5h6M271 79.5h4M278 79.5h4M293 79.5h7M305 79.5h2M310 79.5h2M322 79.5h2M327 79.5h3M337 79.5h3M341 79.5h1M346 79.5h1M350 79.5h7M361 79.5h2M369 79.5h7M381 79.5h1M388 79.5h1M390 79.5h1M395 79.5h6M403 79.5h6M413 79.5h2M417 79.5h1M419 79.5h3M428 79.5h3M438 79.5h6M446 79.5h2M450 79.5h1M460 79.5h3M473 79.5h1M479 79.5h2M485 79.5h3M495 79.5h2M500 79.5h2M504 79.5h1M514 79.5h1" stroke="#00e8e8" stroke-width="3" stroke-opacity="0.45"/><polyline points="516,76 518,73 520,72 522,76" stroke="#00e8e8" stroke-width="2" stroke-opacity="0.45"/><polyline points="524,78 526,84 527,90 528,84 529,78" stroke="#00e8e8" stroke-width="2" stroke-opacity="0.5"/><polyline points="530,76 531.5,70 533,67 535,70 536.5,76" stroke="#00e8e8" stroke-width="2" stroke-opacity="0.55"/><polyline points="536.5,76 537.5,84 538.5,95 539.5,125 540.5,160 541.5,200 542.5,220 543.5,250 544.5,272 545.5,300" stroke="#00e8e8" stroke-width="1" stroke-opacity=".3"/><polyline points="545.5,300 546.5,322 547.5,342 549,360 551,384 553,408 554.3,421.5 556.2,439" stroke="#00e8e8" stroke-width="1.2" stroke-opacity=".42"/><polyline points="556.2,439 560,456 564,472 568,489 571,497 574,502" stroke="#00e8e8" stroke-width="2" stroke-opacity=".7"/><path d="M592 506h1M609 493h1M705 429h1M722 419h3M726 431h1M729 419h2M771 421h2M790 406h3" stroke="#00e8e8" stroke-width="2" stroke-opacity="0.17"/><path d="M611 489.5h4M647 463.5h3M672 450.5h4M748 412.5h3" stroke="#00e8e8" stroke-width="3" stroke-opacity="0.17"/><path d="M577 499.5h1M590 496.5h2M595 499.5h2M599 496.5h3M610 483.5h1M611 486.5h4M615 480.5h1M618 483.5h3M623 473.5h2M626 470.5h1M636 470.5h1M646 457.5h1M647 454.5h1M647 460.5h1M648 454.5h1M648 460.5h1M649 454.5h1M649 460.5h1M650 457.5h5M660 454.5h1M665 447.5h2M667 444.5h5M672 447.5h4M679 441.5h1M680 444.5h6M686 434.5h1M686 441.5h1M687 434.5h1M687 441.5h1M691 434.5h4M705 431.5h1M710 428.5h1M712 431.5h4M722 421.5h1M722 428.5h1M723 421.5h1M723 428.5h1M724 421.5h1M724 428.5h1M726 421.5h1M743 418.5h1M751 421.5h4M757 421.5h4M765 415.5h4M771 418.5h2M785 415.5h2M788 408.5h5" stroke="#00e8e8" stroke-width="3" stroke-opacity="0.25"/><path d="M582 503h3M592 503h1M609 490h1M627 477h2M637 464h1M643 464h1M654 451h1M659 451h1M685 438h1M695 438h4M700 438h4M720 425h2M731 425h1M734 425h6M783 412h2" stroke="#00e8e8" stroke-width="4" stroke-opacity="0.25"/><path d="M574 499.5h1M574 506.5h1M575 499.5h1M575 506.5h1M577 506.5h1M582 509.5h4M586 506.5h1M587 499.5h1M594 496.5h1M597 493.5h1M597 499.5h1M598 496.5h1M603 493.5h4M616 483.5h2M621 483.5h1M622 473.5h1M622 480.5h1M630 470.5h1M633 473.5h1M634 470.5h2M640 460.5h3M644 457.5h2M655 457.5h3M658 454.5h1M661 447.5h1M661 454.5h1M675 441.5h4M688 441.5h7M699 431.5h1M701 431.5h4M706 434.5h4M711 434.5h1M716 431.5h4M726 428.5h1M727 421.5h4M731 418.5h1M732 421.5h2M734 418.5h2M744 418.5h3M747 421.5h1M748 415.5h1M748 421.5h1M749 415.5h1M749 421.5h1M750 415.5h1M750 421.5h1M758 415.5h3M775 418.5h2M782 415.5h1M787 415.5h3M793 408.5h1M793 415.5h1M794 408.5h1M794 415.5h1M795 408.5h1M795 415.5h1M796 408.5h1M796 415.5h2" stroke="#00e8e8" stroke-width="3" stroke-opacity="0.42"/><path d="M578 503h3M590 503h2M601 490h2M607 490h2M621 477h1M625 477h2M644 464h1M656 451h2M681 438h4M699 438h1M717 425h3M740 425h3M778 412h4" stroke="#00e8e8" stroke-width="4" stroke-opacity="0.42"/><path d="M582 506.5h3M592 499.5h1M599 493.5h3M607 486.5h4M611 483.5h4M618 480.5h4M625 473.5h4M634 467.5h2M650 454.5h8M667 447.5h5M676 444.5h4M680 441.5h6M700 434.5h6M708 431.5h4M712 428.5h4M734 421.5h4M743 421.5h4M747 418.5h7M755 418.5h3M769 415.5h2M773 415.5h5" stroke="#00e8e8" stroke-width="3" stroke-opacity="0.65"/><path d="M588 503h2M606 490h1M622 477h3M638 464h4M658 451h1M661 451h1M664 451h3M686 438h9M725 425h2M729 425h2M732 425h2M785 412h5M793 412h4" stroke="#00e8e8" stroke-width="4" stroke-opacity="0.65"/><path d="M578 506.5h4M585 506.5h1M590 499.5h2M593 499.5h2M595 496.5h3M598 493.5h1M602 493.5h1M615 483.5h1M616 480.5h2M629 473.5h2M631 470.5h3M636 467.5h2M643 460.5h4M647 457.5h3M659 454.5h1M672 444.5h4M695 434.5h5M706 431.5h2M716 428.5h6M731 421.5h1M738 421.5h5M754 418.5h1M758 418.5h11M771 415.5h2M778 415.5h4M783 415.5h2" stroke="#00e8e8" stroke-width="3" stroke-opacity="0.88"/><path d="M574 503h4M586 503h2M603 490h3M642 464h1M660 451h1M662 451h2M722 425h3M727 425h2M782 412h1M790 412h3M797 412h3" stroke="#00e8e8" stroke-width="4" stroke-opacity="0.88"/><path d="M574 503h3M577 505h5M582 506h5M587 505h1M588 503h2M590 501h2M592 500h2M594 498h2M597 497h1M598 495h1M600 493h1M601 492h2M603 490h3M606 488h2M608 487h2M610 485h1M612 484h3M615 482h5M620 480h1M621 479h2M624 477h1M625 475h2M627 474h2M629 472h3M632 471h2M635 469h2M637 467h1M638 464h3M641 462h2M643 461h3M646 459h2M648 458h2M650 456h3M653 454h2M655 453h3M658 451h1M659 453h2M661 449h1M662 451h1M663 449h3M666 448h2M669 448h3M672 446h2M674 445h1M675 443h3M678 445h1M679 443h3M683 441h3M686 440h1M687 438h1M688 440h2M690 438h4M694 436h2M697 435h1M698 436h1M699 435h4M703 433h5M708 432h3M712 432h2M714 430h2M716 428h4M720 427h6M727 423h1M728 425h1M729 423h1M730 425h1M732 423h3M735 422h9M744 420h5M750 420h3M753 419h1M754 420h2M757 419h2M760 419h1M761 417h7M769 417h3M772 415h4M777 415h2M779 414h6M786 414h2M788 412h1M789 414h3M792 412h8" stroke="#00e8e8" stroke-width="2" stroke-opacity="1"/><path d="M809 406h2M823 403h1M831 415h4M848 403h1M862 403h1M865 403h3M892 408h2M926 396h1M943 405h2M957 393h1M990 393h1" stroke="#00e8e8" stroke-width="2" stroke-opacity="0.17"/><path d="M859 411.5h1M887 399.5h1" stroke="#00e8e8" stroke-width="3" stroke-opacity="0.17"/><path d="M800 415.5h3M803 408.5h2M809 415.5h2M842 405.5h4M848 405.5h1M856 405.5h3M859 408.5h3M865 405.5h3M872 408.5h2M885 408.5h2M888 408.5h1M889 405.5h1M894 408.5h2M899 405.5h1M902 405.5h2M904 402.5h3M933 405.5h1M942 402.5h1M943 395.5h1M943 402.5h1M944 395.5h1M944 402.5h1M949 395.5h1M950 402.5h1M957 395.5h1M957 402.5h1M959 395.5h1M959 402.5h1M960 395.5h1M960 402.5h1M961 395.5h1M961 402.5h4M969 395.5h4M973 402.5h4M992 395.5h1M995 395.5h3M1004 402.5h3M1007 395.5h2M1015 395.5h3M1019 395.5h1" stroke="#00e8e8" stroke-width="3" stroke-opacity="0.25"/><path d="M818 412h8M839 412h7M848 412h1M889 399h5M920 399h1M925 399h2M930 399h1M932 399h1M936 399h6M951 399h3" stroke="#00e8e8" stroke-width="4" stroke-opacity="0.25"/><path d="M805 408.5h1M805 415.5h1M806 408.5h1M806 415.5h1M807 408.5h4M811 415.5h1M823 405.5h1M829 405.5h10M846 405.5h2M849 405.5h4M862 405.5h1M863 408.5h2M868 408.5h4M872 402.5h2M877 402.5h2M881 408.5h4M887 402.5h1M887 408.5h1M888 402.5h1M892 405.5h2M894 402.5h2M896 405.5h3M900 402.5h2M907 408.5h2M909 405.5h2M919 405.5h2M924 402.5h1M927 405.5h3M945 395.5h1M945 402.5h1M946 395.5h1M946 402.5h1M947 395.5h2M949 402.5h1M954 402.5h3M958 395.5h1M962 395.5h3M965 402.5h4M977 395.5h1M978 402.5h8M986 395.5h1M986 402.5h1M987 395.5h1M987 402.5h1M988 395.5h1M988 402.5h1M989 395.5h1M989 402.5h1M990 395.5h1M990 402.5h1M991 395.5h1M991 402.5h1M1001 395.5h6M1007 402.5h4M1011 395.5h4M1018 395.5h1M1020 402.5h1" stroke="#00e8e8" stroke-width="3" stroke-opacity="0.42"/><path d="M812 412h6M826 412h13M846 412h2M853 412h3M862 412h1M903 399h1M914 399h3M927 399h3M933 399h3" stroke="#00e8e8" stroke-width="4" stroke-opacity="0.42"/><path d="M819 408.5h7M846 408.5h2M853 408.5h3M860 405.5h2M862 408.5h1M863 405.5h2M865 408.5h3M881 405.5h4M888 405.5h1M889 402.5h5M894 405.5h2M896 402.5h3M900 405.5h2M902 402.5h2M914 402.5h3M921 402.5h3M927 402.5h3M931 402.5h2M934 402.5h2" stroke="#00e8e8" stroke-width="3" stroke-opacity="0.7"/><path d="M803 412h5M809 412h2M924 399h1M942 399h9M962 399h7M973 399h5M982 399h8M991 399h7M1007 399h11M1020 399h1" stroke="#00e8e8" stroke-width="4" stroke-opacity="0.7"/><path d="M812 408.5h7M826 408.5h20M848 408.5h5M856 408.5h3M859 405.5h1M868 405.5h13M885 405.5h3M899 402.5h1M904 405.5h5M909 402.5h5M917 402.5h4M925 402.5h2M930 402.5h1M933 402.5h1M936 402.5h6M951 402.5h3" stroke="#00e8e8" stroke-width="3" stroke-opacity="0.9"/><path d="M800 412h3M808 412h1M811 412h1M954 399h8M969 399h4M978 399h4M990 399h1M998 399h9M1018 399h2" stroke="#00e8e8" stroke-width="4" stroke-opacity="0.9"/><path d="M800 411.5h6M806 410.5h15M821 409.5h1M823 409.5h8M832 409.5h1M833 408.5h4M837 409.5h2M840 409.5h3M843 408.5h2M846 407.5h3M850 407.5h4M855 407.5h4M859 406.5h9M868 405.5h2M870 406.5h2M872 405.5h8M881 404.5h4M885 405.5h2M887 404.5h3M890 403.5h4M894 404.5h7M902 403.5h4M906 402.5h17M923 401.5h2M926 401.5h4M930 400.5h6M936 401.5h2M938 400.5h2M941 400.5h7M948 399.5h2M950 400.5h3M953 399.5h6M960 399.5h15M976 398.5h1M977 399.5h3M980 398.5h1M981 399.5h4M985 398.5h1M987 398.5h1M988 399.5h2M990 398.5h6M996 399.5h2M998 398.5h2M1001 399.5h1M1003 399.5h1M1004 398.5h1M1007 398.5h4M1011 397.5h3M1014 398.5h7" stroke="#00e8e8" stroke-width="1" stroke-opacity="1"/></g><g stroke="#00e8e8" stroke-width="1" fill="none" shape-rendering="crispEdges"><line x1="21" y1="77.5" x2="1021" y2="77.5"/><line x1="21" y1="502.5" x2="1021" y2="502.5"/><line x1="540.5" y1="19" x2="540.5" y2="668" stroke-dasharray="4 4"/><line x1="615.5" y1="19" x2="615.5" y2="668" stroke-dasharray="4 4"/><rect x="533.5" y="70.5" width="14" height="14"/></g><circle cx="615.5" cy="502.5" r="7" stroke="#00e8e8" stroke-width="1.1" fill="none"/><path d="M503.5 24h11l.5 .5v10.5l-6 4l-6-4v-10.5z" fill="#ffa000"/><path d="M504.5 25.3h9v1.9h-3.5v9h-2v-9h-3.5z" fill="#000"/><path d="M516 17h11l-5.5 6.5z" fill="#ffa000"/><path d="M1010 198.5l6-5.5v11z" fill="#ffff00"/><rect x="1016" y="198" width="5" height="1.5" fill="#ffff00"/></svg><svg width="22" height="20" style="left:0px;top:76px" viewBox="0 0 22 20"><path d="M1 3h13l6 8l-6 8h-13z" fill="#000"/><path d="M0 1h13l6 8l-6 8h-13z" fill="#00e8e8"/></svg><span class="t" style="left:3.5px;top:78.5px;color:#000;-webkit-text-stroke-width:.6px">2</span><svg width="22" height="20" style="left:0px;top:317px" viewBox="0 0 22 20"><path d="M0 1.8h13l5.6 7.7l-5.6 7.7h-13z" fill="#000" stroke="#ffff00" stroke-width="1.6"/></svg><span class="t one" style="left:4.5px;top:319.5px;color:#ffff00">1</span><div class="circ" style="left:26px;top:79px">a</div><div class="circ b" style="left:26px;top:484px">b</div><div class="box" style="left:719px;top:40px;width:302px;height:60px"><svg width="20" height="40" style="left:16px;top:1px" viewBox="0 0 20 40"><rect x="2.5" y="2.5" width="14" height="14" fill="none" stroke="#00e8e8"/><circle cx="9.5" cy="29.5" r="7" fill="none" stroke="#00e8e8"/></svg><div class="circ" style="left:169px;top:2px">a</div><div class="circ b" style="left:169px;top:21px">b</div><span class="t" style="left:80.8px;top:4px;letter-spacing:0.65px;color:#00e8e8">3<span class="o">1</span>0.0ns</span><span class="t" style="left:81px;top:23px;letter-spacing:0.62px;color:#00e8e8"><span class="o">1</span>.060µs</span><span class="t" style="left:72.8px;top:42px;letter-spacing:0.66px;color:#00e8e8"><span class="dl">Δ</span>750.0ns</span><span class="t" style="left:207.7px;top:4px;letter-spacing:0.4px;color:#00e8e8">2.400mV</span><span class="t" style="left:202.2px;top:23px;letter-spacing:0.07px;color:#00e8e8">−<span class="o">1</span>28.4mV</span><span class="t" style="left:201px;top:42px;letter-spacing:0.57px;color:#00e8e8"><span class="dl">Δ</span><span class="o">1</span>30.8mV</span></div>
</main>
<section><div class="box" style="left:20px;top:652px;width:555px;height:21px"><div class="pill p1" style="left:5px;top:2px">1</div><div class="pill p2" style="left:144px;top:2px">2</div><span class="bw" style="left:122px;top:4px;color:#ffff00">B</span><span class="bw" style="left:126.5px;top:8.5px;color:#ffff00">W</span><span class="bw" style="left:261px;top:4px;color:#00e8e8">B</span><span class="bw" style="left:265.5px;top:8.5px;color:#00e8e8">W</span><span class="t" style="left:46.9px;top:3px;letter-spacing:0.25px;color:#ffff00">2.00 V</span><span class="t" style="left:186px;top:3px;letter-spacing:0.28px;color:#00e8e8">20.0mV</span></div>
<div class="box" style="left:20px;top:674px;width:555px;height:39px"><div class="pill p1" style="left:5px;top:20px">1</div><span class="t" style="left:137.1px;top:3px;letter-spacing:0.38px;color:#ffffff">Value</span><span class="t" style="left:224.5px;top:3px;letter-spacing:0.67px;color:#ffffff">Mean</span><span class="t" style="left:307.6px;top:3px;letter-spacing:1.95px;color:#ffffff">Min</span><span class="t" style="left:389.5px;top:3px;letter-spacing:-0.15px;color:#ffffff">Max</span><span class="t" style="left:470.5px;top:3px;letter-spacing:0.43px;color:#ffffff">Std Dev</span><span class="t" style="left:34.3px;top:21px;letter-spacing:0.76px;color:#ffff00">Frequency</span><span class="t" style="left:136.1px;top:20px;letter-spacing:-1.93px;color:#ffff00;-webkit-text-stroke-width:0px;text-shadow:none">−−−−</span><span class="t" style="left:180.4px;top:21px;letter-spacing:0.85px;color:#ffff00">.Hz</span><span class="t" style="left:224.4px;top:21px;letter-spacing:0.84px;color:#ffffff">No period found</span></div>
<div class="box" style="left:582px;top:670px;width:148px;height:38px"><svg width="36" height="14" style="left:3px;top:20px" viewBox="0 0 36 14"><rect x="1" y="0.3" width="12" height="13" rx="2" fill="#ffa000"/><path d="M2.6 1.6h8.8v2h-3.4v8.8h-2v-8.8h-3.4z" fill="#000"/><path d="M14 6.7h8.5M19.5 3.7l3 3l-3 3" fill="none" stroke="#ffa000" stroke-width="1.5"/><path d="M24 3.5h11l-5.5 6z" fill="#ffa000"/></svg><span class="t" style="left:5.2px;top:3px;letter-spacing:0.7px;color:#ffffff"><span class="o">1</span>.00µs</span><span class="t" style="left:38.5px;top:20px;letter-spacing:0.62px;color:#ffa000"><span class="o">1</span>20.000ns</span></div>
<div class="box" style="left:737px;top:670px;width:107px;height:38px"><span class="t" style="left:4.5px;top:3px;letter-spacing:0.73px;color:#ffffff">2.50GS/s</span><span class="t" style="left:3.9px;top:20px;letter-spacing:1.12px;color:#ffffff"><span class="o">1</span>M points</span></div>
<div class="box" style="left:851px;top:670px;width:171px;height:38px"><div class="pill p1" style="left:30px;top:2px">1</div><svg width="16" height="14" style="left:67px;top:2px" viewBox="0 0 16 14"><path d="M1 12h4.5l3-9.5h4.5" fill="none" stroke="#fff" stroke-width="1.8"/></svg><span class="t" style="left:112.8px;top:3px;letter-spacing:0.3px;color:#ffffff">3.96 V</span></div>
</section>
<nav><div class="tab" style="left:0px;top:714px"><span class="t" style="left:4px;top:22px;color:#000">2</span></div>
<div class="btn" style="left:20px;top:714px"><div class="sel" style="left:12px;top:27px;width:30px;height:26px"></div><span class="t" style="left:21px;top:6px;letter-spacing:1px;color:#000">Coupling</span><span class="t" style="left:17px;top:33px;letter-spacing:-1px;color:#000">DC</span><span class="t" style="left:74px;top:33px;letter-spacing:1px;color:#000">AC</span></div>
<div class="btn" style="left:138px;top:714px"><div class="sel" style="left:4px;top:27px;width:47px;height:26px"></div><span class="t" style="left:6.8px;top:6px;letter-spacing:1.06px;color:#000">Termination</span><span class="t" style="left:10px;top:33px;letter-spacing:2px;color:#000"><span class="o">1</span>MΩ</span><span class="t" style="left:67px;top:33px;letter-spacing:1px;color:#000">50Ω</span></div>
<div class="btn" style="left:256px;top:714px"><div class="sel" style="left:68px;top:27px;width:33px;height:26px"></div><span class="t" style="left:30.7px;top:6px;letter-spacing:1.08px;color:#000">Invert</span><span class="t" style="left:16.1px;top:33px;letter-spacing:1.75px;color:#000">On</span><span class="t" style="left:73px;top:33px;letter-spacing:0.5px;color:#000">Off</span></div>
<div class="btn f" style="left:374px;top:714px"><div class="sel" style="left:28px;top:27px;width:56px;height:16px;border-radius:0"></div><span class="t" style="left:13.6px;top:11px;letter-spacing:0.76px;color:#000">Bandwidth</span><span class="t" style="left:28.2px;top:28px;letter-spacing:0.88px;color:#000">20MHz</span></div>
<div class="btn f" style="left:492px;top:714px"><div class="pill p2" style="left:21px;top:18px">2</div><span class="t" style="left:52.8px;top:19px;letter-spacing:-0.12px;color:#000">Label</span></div>
<div class="btn f" style="left:728px;top:714px"><svg width="24" height="12" style="left:44px;top:12px" viewBox="0 0 24 12"><defs><linearGradient id="g" x1="0" y1="0" x2="0" y2="1"><stop offset=".55" stop-color="#e0e8f8"/><stop offset="1" stop-color="#808080"/></linearGradient></defs><path d="M12 0l11 11h-22z" fill="url(#g)"/></svg><span class="t" style="left:36.5px;top:26px;letter-spacing:1.03px;color:#000">More</span></div>
<div class="box" style="left:909px;top:729px;width:113px;height:38px"><span class="t" style="left:4.8px;top:4px;letter-spacing:0.13px;color:#ffffff"><span class="o">1</span>8 Dec  2020</span><span class="t" style="left:5px;top:20px;letter-spacing:0.54px;color:#ffffff"><span class="o">1</span>2:26:06</span></div>
</nav>
</body></html>
